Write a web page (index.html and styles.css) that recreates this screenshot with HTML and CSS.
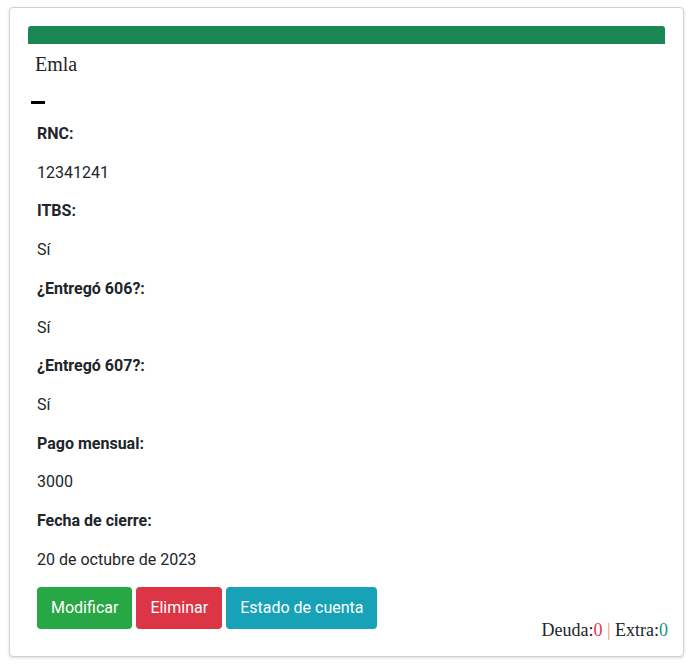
FILE: index.html
```html
<!DOCTYPE html>
<html lang="es">
<head>
<meta charset="utf-8">
<title>Emla</title>
<link rel="stylesheet" href="styles.css">
</head>
<body>
<div class="card">
  <div class="card-bar"></div>
  <h4 class="card-title">Emla</h4>
  <div class="dash"></div>
  <div class="fields">
    <p class="label">RNC:</p>
    <p class="value">12341241</p>
    <p class="label">ITBS:</p>
    <p class="value">Sí</p>
    <p class="label">¿Entregó 606?:</p>
    <p class="value">Sí</p>
    <p class="label">¿Entregó 607?:</p>
    <p class="value">Sí</p>
    <p class="label">Pago mensual:</p>
    <p class="value">3000</p>
    <p class="label">Fecha de cierre:</p>
    <p class="value">20 de octubre de 2023</p>
  </div>
  <div class="footer">
    <div class="actions">
      <button class="btn btn-success">Modificar</button>
      <button class="btn btn-danger">Eliminar</button>
      <button class="btn btn-info">Estado de cuenta</button>
    </div>
    <div class="balance">Deuda:<span class="debt">0</span> <span class="sep">|</span> Extra:<span class="extra">0</span></div>
  </div>
</div>
</body>
</html>
```

FILE: styles.css
```css
html, body {
  margin: 0;
  padding: 0;
  background: #ffffff;
}
body {
  padding: 7px 12px 8px 9px;
  font-family: Roboto, "Liberation Sans", sans-serif;
  color: #212529;
}
.card {
  border: 1px solid #d2d2d2;
  border-radius: 4px;
  box-shadow: 0 1px 3px rgba(0, 0, 0, 0.15);
  padding: 18px 18px 16px 18px;
  background: #fff;
}
.card-bar {
  height: 18px;
  background: #198754;
  border-radius: 3px 3px 0 0;
}
.card-title {
  margin: 9px 0 0 7px;
  font-family: "Liberation Serif", "Times New Roman", serif;
  font-weight: normal;
  font-size: 20px;
  line-height: 22px;
  color: #212529;
}
.dash {
  width: 14px;
  height: 3px;
  background: #000;
  margin: 26px 0 0 3px;
}
.fields {
  margin: 19px 0 0 9px;
}
.fields p {
  margin: 0 0 16px 0;
  font-size: 16px;
  line-height: 22.7px;
}
.label {
  font-weight: 700;
}
.footer {
  display: flex;
  justify-content: space-between;
  align-items: flex-start;
  padding-left: 9px;
  margin-top: 1px;
}
.actions {
  display: flex;
  gap: 4px;
}
.btn {
  font-family: Roboto, "Liberation Sans", sans-serif;
  font-size: 16px;
  line-height: 24px;
  padding: 9px 14px;
  border: 0;
  border-radius: 4px;
  color: #fff;
}
.btn-success { background: #28a745; }
.btn-danger { background: #dc3545; }
.btn-info { background: #17a2b8; }
.balance {
  margin-top: 33px;
  margin-right: -3px;
  font-family: "Liberation Serif", "Times New Roman", serif;
  font-size: 18px;
  line-height: 20px;
  color: #212529;
}
.debt { color: #e8334f; }
.sep { color: #e8955a; }
.extra { color: #13967a; }
```
